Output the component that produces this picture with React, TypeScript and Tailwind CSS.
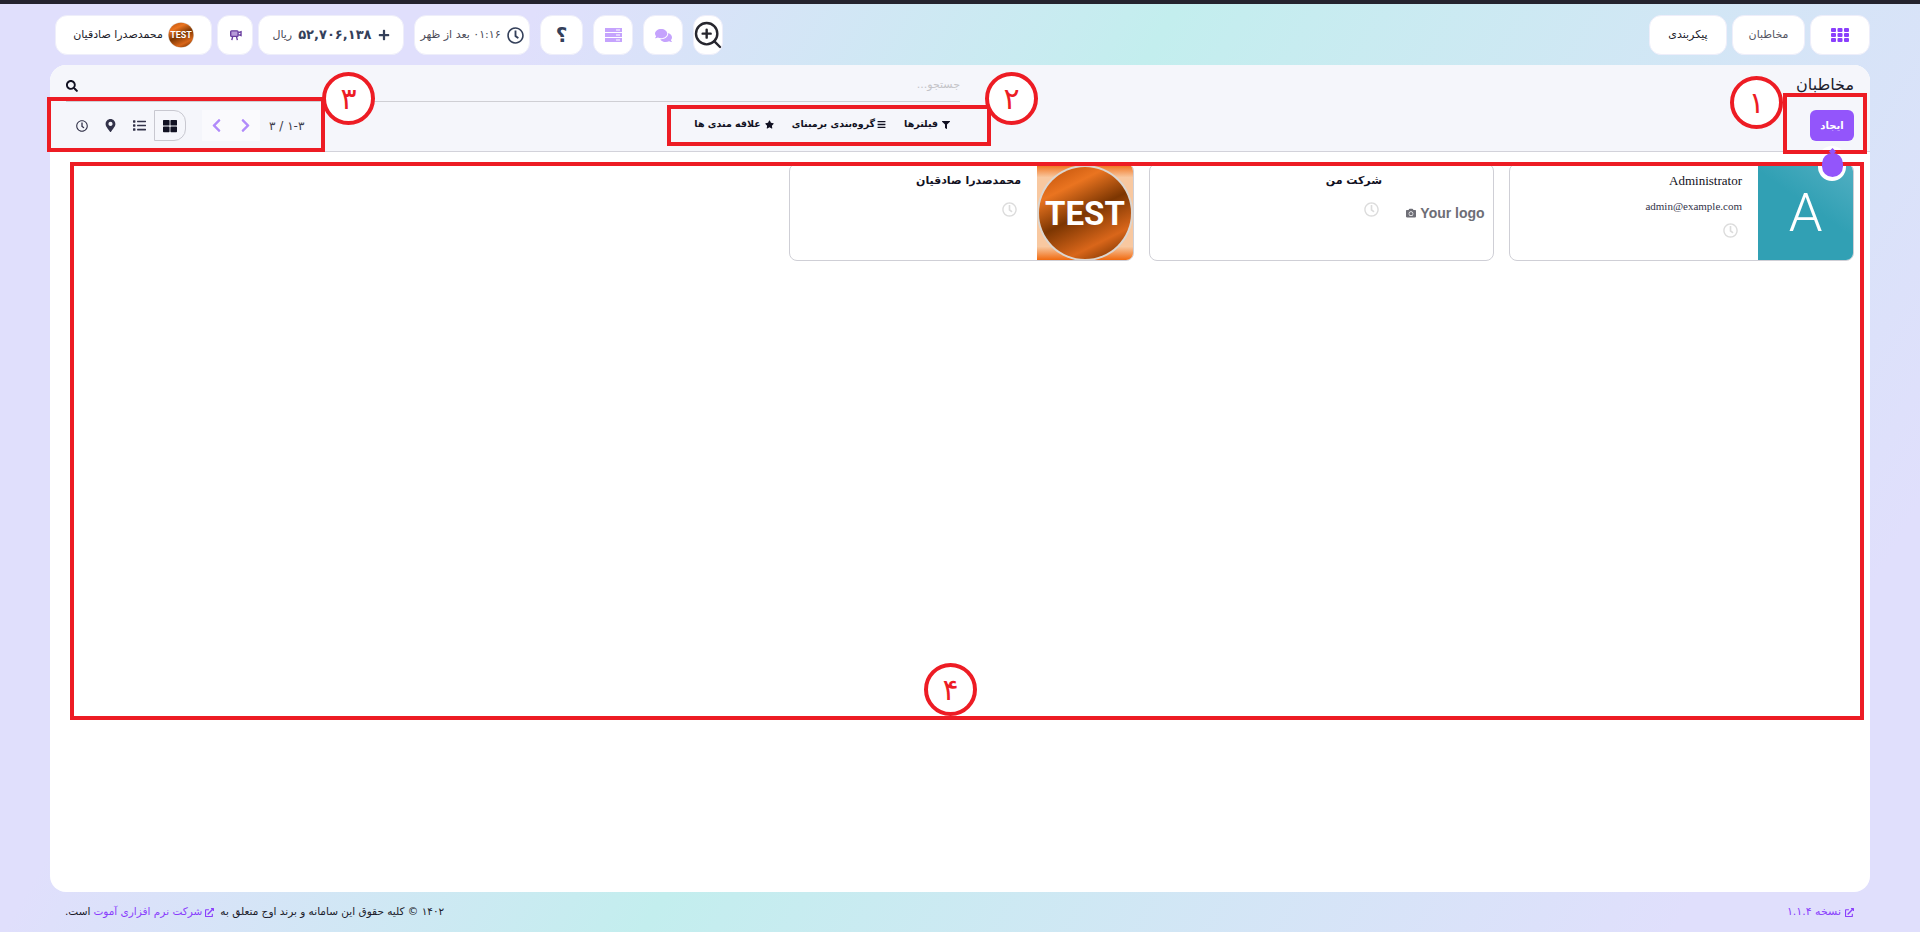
import { FaComments, FaExternalLinkAlt, FaFilter, FaBars, FaStar, FaThLarge, FaList, FaMapMarkerAlt, FaChevronLeft, FaChevronRight, FaRegClock, FaSearch, FaCamera, FaPlus } from "react-icons/fa";
import { ZoomIn } from "lucide-react";

const TestLogo = ({ id, className }: { id: string; className: string }) => (
  <svg viewBox="0 0 96 98" className={className} preserveAspectRatio="none">
    <defs>
      <linearGradient id={id} x1="0.25" y1="0" x2="0.75" y2="1">
        <stop offset="0" stopColor="#c9590f" />
        <stop offset="0.2" stopColor="#ea7420" />
        <stop offset="0.5" stopColor="#7c3602" />
        <stop offset="0.82" stopColor="#d9661a" />
        <stop offset="1" stopColor="#8a3c04" />
      </linearGradient>
    </defs>
    <circle cx="48" cy="49" r="48" fill="#dcd6d0" />
    <circle cx="48" cy="49" r="46" fill={`url(#${id})`} />
    <text x="48" y="61" textAnchor="middle" fontFamily="Roboto" fontWeight="700" fontSize="33" fill="#fff">TEST</text>
  </svg>
);

const ClockIcon = () => <FaRegClock className="text-[15px] text-[#dcdcdc]" />;

const HeaderBox = ({ className, children }: { className: string; children: React.ReactNode }) => (
  <div className={`flex h-10 items-center justify-center rounded-xl border border-[#eeeefa] bg-white ${className}`}>{children}</div>
);

const AppsIcon = () => (
  <svg viewBox="0 0 18 14" className="h-[14px] w-[18px]" fill="#8a3ffc">
    <rect x="0" y="0" width="5" height="4" rx="1" />
    <rect x="6.5" y="0" width="5" height="4" rx="1" />
    <rect x="13" y="0" width="5" height="4" rx="1" />
    <rect x="0" y="5" width="5" height="4" rx="1" />
    <rect x="6.5" y="5" width="5" height="4" rx="1" />
    <rect x="13" y="5" width="5" height="4" rx="1" />
    <rect x="0" y="10" width="5" height="4" rx="1" />
    <rect x="6.5" y="10" width="5" height="4" rx="1" />
    <rect x="13" y="10" width="5" height="4" rx="1" />
  </svg>
);

const ServerIcon = () => (
  <svg viewBox="0 0 17 14" className="h-[14px] w-[17px]">
    <rect y="0" width="17" height="4" fill="#c5a3fd" />
    <rect y="5" width="17" height="4" fill="#c5a3fd" />
    <rect y="10" width="17" height="4" fill="#c5a3fd" />
    <rect x="11" y="1.5" width="4" height="1" fill="#fff" />
    <rect x="11" y="6.5" width="4" height="1" fill="#fff" />
    <rect x="11" y="11.5" width="4" height="1" fill="#fff" />
  </svg>
);

const BoardIcon = () => (
  <svg viewBox="0 0 14 13" className="h-[12px] w-[13px]" fill="none" stroke="#6b3fa0" strokeWidth="1.5">
    <rect x="1.8" y="2" width="8" height="6" rx="1" fill="#b79ad8" />
    <path d="M10 4l3-1v4l-3-1M4 8l-1 4M8 8l1 4" />
  </svg>
);

export default function App() {
  return (
    <div dir="rtl" className="relative flex h-screen flex-col overflow-hidden bg-[linear-gradient(120deg,#e0dffc_22%,#c3eeee_48%,#e0dffc_90%)] font-['DejaVu_Sans',sans-serif] text-[#1c1c2b]">
      <div className="h-[4px] bg-[#24232e]" />

      <header className="mt-[11px] flex h-10 items-center justify-between pr-[50px] pl-[55px]">
        <div className="flex gap-[5px]">
          <HeaderBox className="w-[60px]"><AppsIcon /></HeaderBox>
          <HeaderBox className="w-[73px] text-[11px] text-[#555564]">مخاطبان</HeaderBox>
          <HeaderBox className="w-[78px] text-[11px]">پیکربندی</HeaderBox>
        </div>
        <div className="flex gap-[10px]">
          <HeaderBox className="w-[30px]"><ZoomIn className="h-[32px] w-[32px] shrink-0 text-[#26262e]" strokeWidth={1.8} /></HeaderBox>
          <HeaderBox className="w-[40px]"><FaComments className="text-[17px] text-[#c5a3fd]" /></HeaderBox>
          <HeaderBox className="w-[40px]"><ServerIcon /></HeaderBox>
          <HeaderBox className="w-[43px] text-[20px] font-bold text-[#34405a]">؟</HeaderBox>
          <HeaderBox className="w-[116px] gap-[6px] text-[11px] text-[#4b4b58]">
            <FaRegClock className="text-[17px] text-[#34405a]" />
            <span>۰۱:۱۶ بعد از ظهر</span>
          </HeaderBox>
          <div className="flex gap-[5px]">
            <HeaderBox className="w-[146px] gap-[6px]">
              <FaPlus className="text-[12px] text-[#34405a]" />
              <span className="text-[13px] font-bold text-[#34405a]">۵۲,۷۰۶,۱۳۸</span>
              <span className="text-[11px] text-[#4b4b58]">ریال</span>
            </HeaderBox>
            <HeaderBox className="w-[36px]"><BoardIcon /></HeaderBox>
            <HeaderBox className="w-[157px] gap-[5px] text-[11px]">
              <TestLogo id="header-logo" className="h-[26px] w-[26px]" />
              <span>محمدصدرا صادقیان</span>
            </HeaderBox>
          </div>
        </div>
      </header>

      <main className="mx-[50px] mt-[10px] flex-1 overflow-hidden rounded-2xl bg-white">
        <div className="h-[87px] border-b border-[#d2d2da] bg-[#f5f6fb] px-4">
          <div className="flex h-[37px]">
            <div className="flex w-1/2 items-center pt-[3px] text-[16px]">مخاطبان</div>
            <div className="flex w-1/2 items-center justify-between border-b border-[#cfcfd4] pt-[5px]">
              <span className="text-[11px] text-[#c4c4c8]">جستجو...</span>
              <FaSearch className="text-[12px] text-[#111122]" />
            </div>
          </div>
          <div className="mt-[8px] flex h-[31px]">
            <div className="w-1/2">
              <button className="h-[31px] w-[44px] rounded-md bg-[#9355fb] text-[10px] font-bold text-white">ایجاد</button>
            </div>
            <div className="flex w-1/2 items-center justify-between pr-[10px]">
              <div className="-mt-[2px] flex items-center gap-[18px] text-[9.5px] font-bold text-[#111122]">
                <span className="flex items-center gap-[4px]"><FaFilter className="text-[8px]" />فیلترها</span>
                <span className="flex items-center gap-[2px]"><FaBars className="text-[9px]" />گروه‌بندی برمبنای</span>
                <span className="flex items-center gap-[4px]"><FaStar className="text-[9px]" />علاقه مندی ها</span>
              </div>
              <div className="flex h-[31px] items-center pl-[9px]">
                <span className="ml-[9px] text-[12px] text-[#3c3c4a]">۱-۳ / ۳</span>
                <div className="flex h-[31px] w-[58px] bg-[#fafafd]">
                  <span className="flex w-[29px] items-center justify-center"><FaChevronRight className="text-[15px] text-[#b18bfa]" /></span>
                  <span className="flex w-[29px] items-center justify-center"><FaChevronLeft className="text-[15px] text-[#b18bfa]" /></span>
                </div>
                <span className="mr-[16px] flex h-[31px] w-[32px] items-center justify-center rounded-r-xl border border-[#c8c8d0]"><FaThLarge className="text-[14px] text-[#111122]" /></span>
                <span className="mr-[8px] flex w-[14px] justify-center"><FaList className="text-[13px] text-[#33334a]" /></span>
                <span className="mr-[15px] flex w-[14px] justify-center"><FaMapMarkerAlt className="text-[13px] text-[#33334a]" /></span>
                <span className="mr-[14px] flex w-[14px] justify-center"><FaRegClock className="text-[12px] text-[#33334a]" /></span>
              </div>
            </div>
          </div>
        </div>

        <div className="flex gap-[15px] pt-[11px] pr-4">
          <article className="flex h-[98px] w-[345px] overflow-hidden rounded-lg border border-[#cfcfd6]">
            <div className="relative flex w-[95px] items-center justify-center bg-[linear-gradient(215deg,#52afc2,#31a0b4_45%)] font-['Roboto',sans-serif] text-[54px] font-light text-white">A</div>
            <div className="flex-1 pt-[7px] pr-[16px] font-['Liberation_Serif',serif] text-[#111122]">
              <div className="text-[13px] [direction:ltr] [text-align:right]">Administrator</div>
              <div className="mt-[7px] text-[11px] text-[#33334a] [direction:ltr] [text-align:right]">admin@example.com</div>
              <div className="mt-[9px] pr-[4px]"><ClockIcon /></div>
            </div>
          </article>
          <article className="flex h-[98px] w-[345px] overflow-hidden rounded-lg border border-[#cfcfd6]">
            <div className="flex w-[95px] items-center justify-center gap-[4px] pt-[2px] font-['Liberation_Sans',sans-serif] text-[14px] font-bold text-[#6e6e76]" dir="ltr">
              <FaCamera className="text-[10px]" />Your logo
            </div>
            <div className="flex-1 pt-[9px] pr-[16px] text-[11px] font-bold text-[#111122]">
              <div>شرکت من</div>
              <div className="mt-[12px] pr-[3px]"><ClockIcon /></div>
            </div>
          </article>
          <article className="flex h-[98px] w-[345px] overflow-hidden rounded-lg border border-[#cfcfd6]">
            <div className="w-[96px] bg-[linear-gradient(180deg,#f06a10,#f8c8a0_14%,#f8c8a0_86%,#f06a10)]">
              <TestLogo id="card-logo" className="h-[98px] w-[96px]" />
            </div>
            <div className="flex-1 pt-[9px] pr-[16px] text-[11px] font-bold text-[#111122]">
              <div>محمدصدرا صادقیان</div>
              <div className="mt-[12px] pr-[4px]"><ClockIcon /></div>
            </div>
          </article>
        </div>
      </main>

      <footer className="flex h-10 items-center justify-between pr-[66px] pl-[65px]">
        <span className="flex items-center gap-[4px] text-[11px] text-[#8a3ffc]"><FaExternalLinkAlt className="text-[9px]" />نسخه ۱.۱.۴</span>
        <span className="flex items-center gap-[3px] text-[10.5px]">
          ۱۴۰۲ © کلیه حقوق این سامانه و برند اوج متعلق به
          <FaExternalLinkAlt className="mr-[3px] text-[9px] text-[#8a3ffc]" />
          <span className="text-[#8a3ffc]">شرکت نرم افزاری آموت</span>
          است.
        </span>
      </footer>

      {/* red markers drawn over the screenshot */}
      <div dir="ltr" className="pointer-events-none absolute inset-0">
        <div className="absolute top-[146px] left-[1818px] h-[35px] w-[28px] rounded-full bg-white" />
        <div className="absolute top-[93px] left-[1783px] h-[61px] w-[84px] border-4 border-[#ed1c24]" />
        <div className="absolute top-[105px] left-[667px] h-[41px] w-[324px] border-4 border-[#ed1c24]" />
        <div className="absolute top-[97px] left-[47px] h-[55px] w-[278px] border-4 border-[#ed1c24]" />
        <div className="absolute top-[162px] left-[70px] h-[558px] w-[1794px] border-4 border-[#ed1c24]" />
        <div className="absolute top-[76px] left-[1730px] flex h-[53px] w-[53px] items-center justify-center rounded-full border-4 border-[#ed1c24] bg-white text-[30px] text-[#ed1c24]">۱</div>
        <div className="absolute top-[72px] left-[985px] flex h-[53px] w-[53px] items-center justify-center rounded-full border-4 border-[#ed1c24] bg-white text-[30px] text-[#ed1c24]">۲</div>
        <div className="absolute top-[72px] left-[322px] flex h-[53px] w-[53px] items-center justify-center rounded-full border-4 border-[#ed1c24] bg-white text-[30px] text-[#ed1c24]">۳</div>
        <div className="absolute top-[663px] left-[924px] flex h-[53px] w-[53px] items-center justify-center rounded-full border-4 border-[#ed1c24] bg-white text-[30px] text-[#ed1c24]">۴</div>
        <div className="absolute top-[149px] left-[1830px] h-[5px] w-[5px] rotate-45 bg-[#9355fb]" />
        <div className="absolute top-[153px] left-[1822px] h-[24px] w-[21px] rounded-full bg-[#9355fb]" />
      </div>
    </div>
  );
}
